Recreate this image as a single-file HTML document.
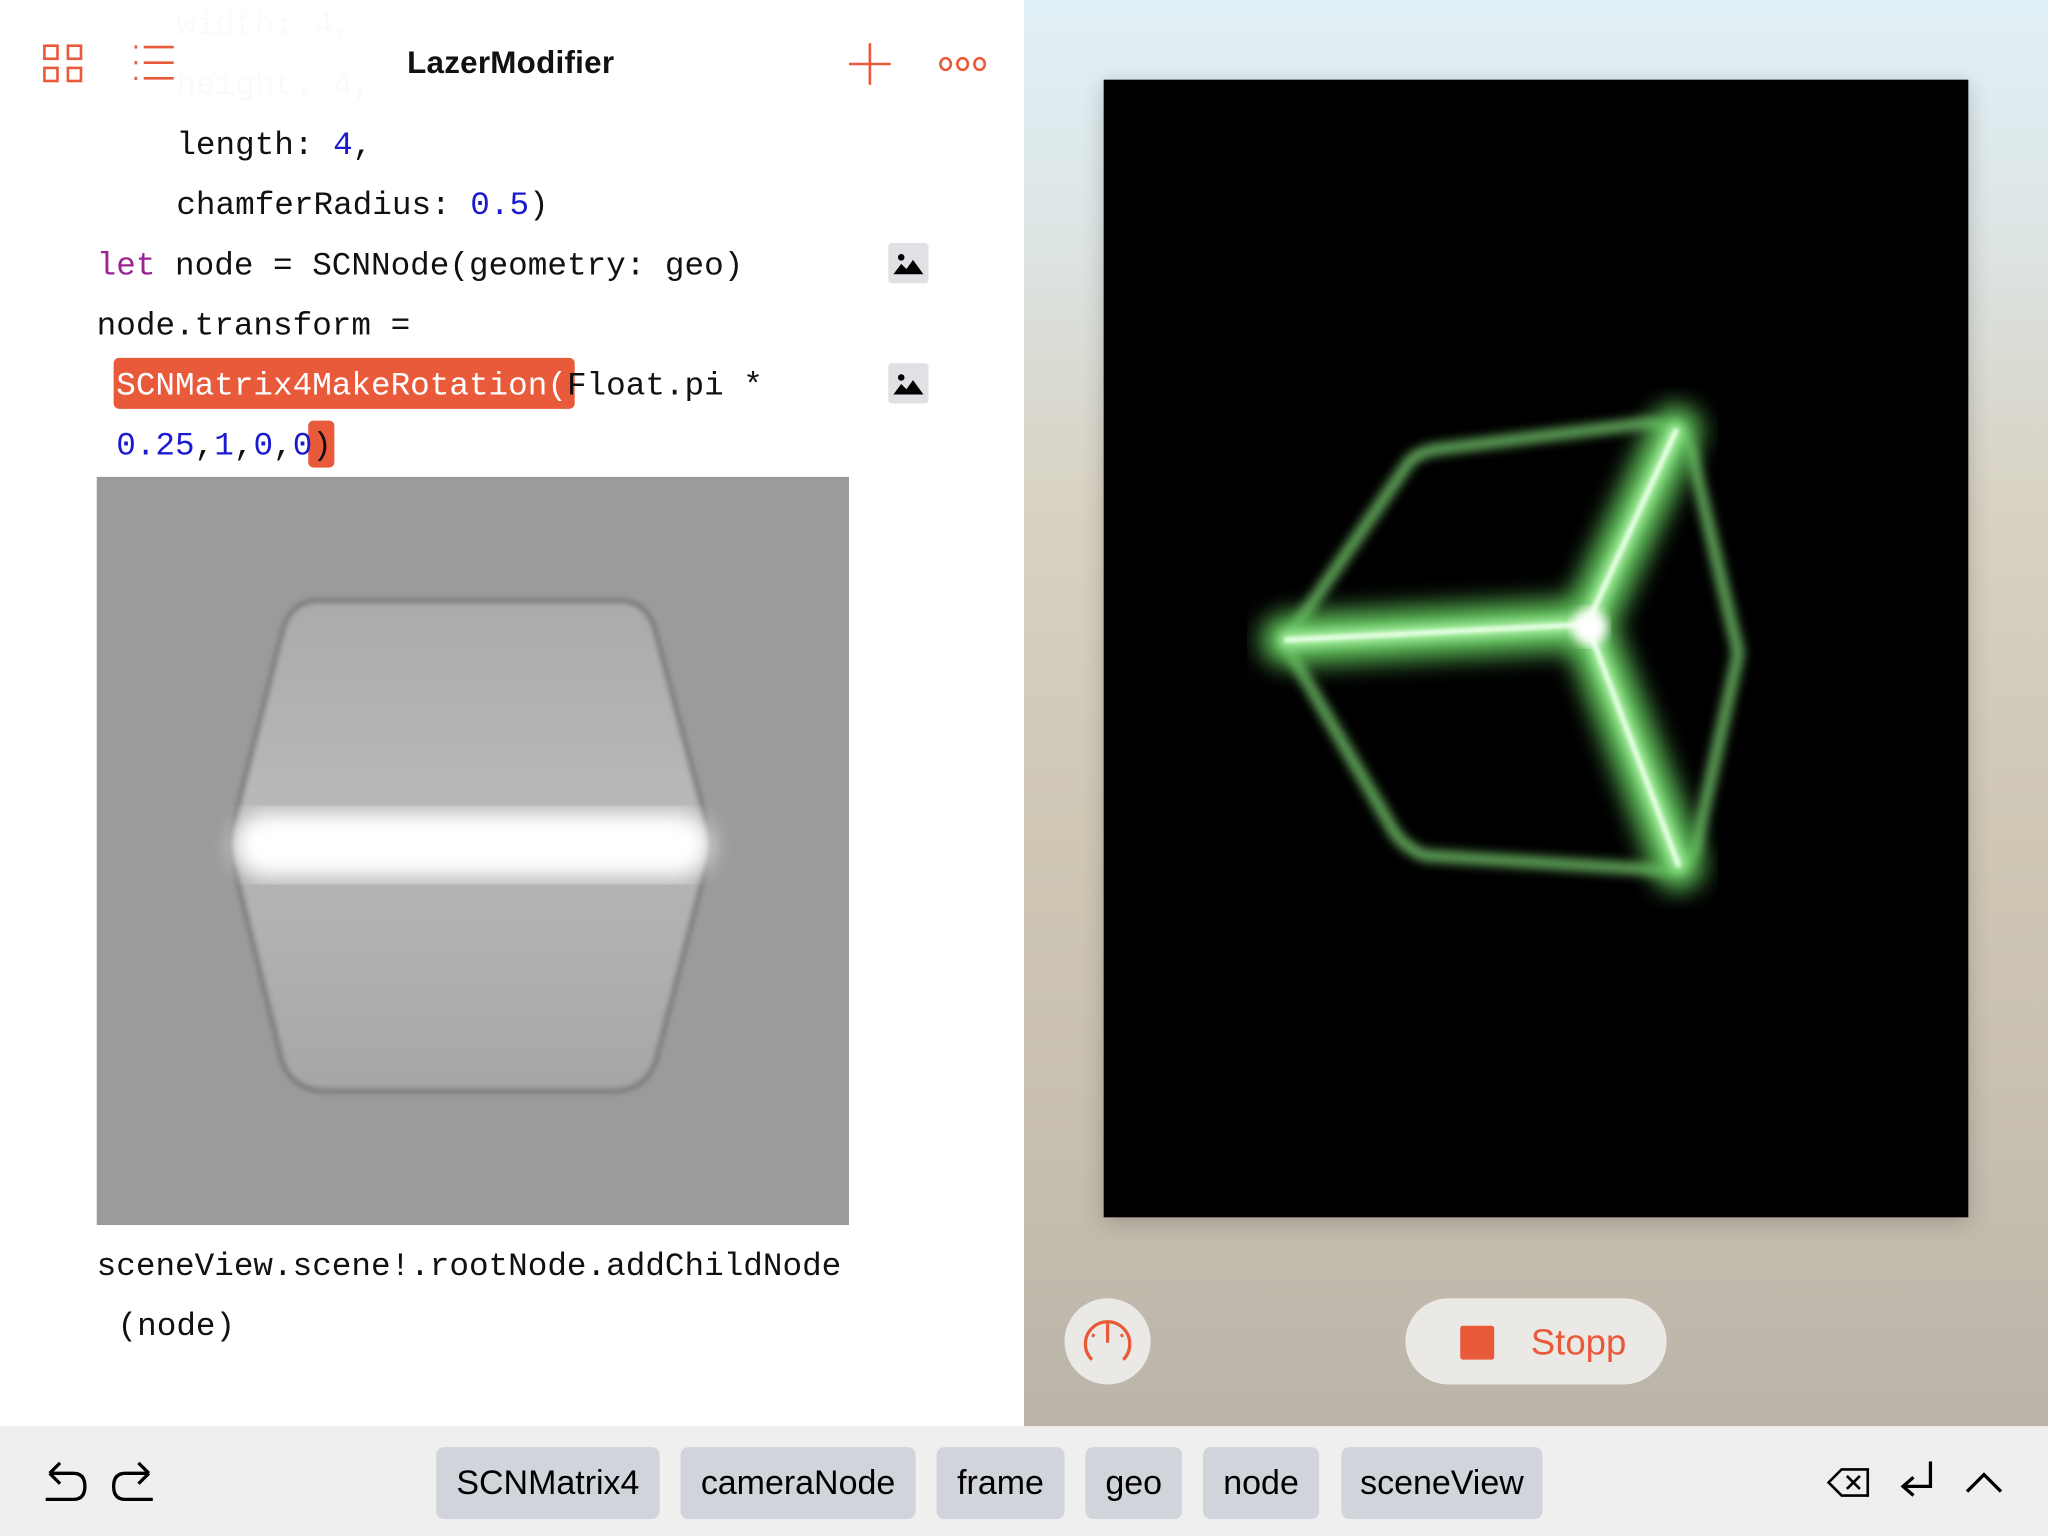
<!DOCTYPE html>
<html><head><meta charset="utf-8"><style>
html,body{margin:0;padding:0;width:2048px;height:1536px;overflow:hidden;background:#fff}
#s{position:absolute;left:0;top:0;width:1568px;height:1176px;transform:scale(1.306122);transform-origin:0 0;font-family:"Liberation Sans",sans-serif}
.c{position:absolute;font-family:"Liberation Mono",monospace;font-size:25px;color:#111;white-space:pre;line-height:30px}
.n{color:#1a1ad0}.k{color:#9b2393}
.chip{position:absolute;top:1108px;height:55px;background:#d1d4da;border-radius:6px;font-size:26px;line-height:55px;text-align:center;color:#000}
</style></head><body><div id="s">
<div style="position:absolute;left:0;top:0;width:784px;height:1092px;background:#fff"></div>
<div class="c" style="left:135px;top:5px;color:#f3f3f3">width: 4,</div>
<div class="c" style="left:135px;top:51px;color:#f3f3f3">height: 4,</div>
<div style="position:absolute;left:0;left:0;top:0;width:784px;height:90px;background:rgba(255,255,255,0.6)"></div>
<div style="position:absolute;left:0;width:784px;top:35px;text-align:center;font-size:24px;font-weight:bold;color:#111;letter-spacing:0.2px;margin-left:-1px">LazerModifier</div>
<svg style="position:absolute;left:0;top:0" width="784" height="90" fill="none" stroke="#e95a3b" stroke-width="2">
<rect x="34" y="35" width="10" height="10"/><rect x="52" y="35" width="10" height="10"/><rect x="34" y="52" width="10" height="10"/><rect x="52" y="52" width="10" height="10"/>
<path d="M110 36H133M110 48H133M110 60H133"/><path d="M103 36h2M103 48h2M103 60h2" stroke-width="2.5"/>
<path d="M666 33V65M650 49H682"/>
<ellipse cx="724" cy="49" rx="4" ry="4.5"/><ellipse cx="737" cy="49" rx="4" ry="4.5"/><ellipse cx="750" cy="49" rx="4" ry="4.5"/>
</svg>
<div class="c" style="left:135px;top:97px">length: <span class="n">4</span>,</div>
<div class="c" style="left:135px;top:143px">chamferRadius: <span class="n">0.5</span>)</div>
<div class="c" style="left:74px;top:189px"><span class="k">let</span> node = SCNNode(geometry: geo)</div>
<div class="c" style="left:74px;top:235px">node.transform =</div>
<div style="position:absolute;left:87px;top:274px;width:353px;height:39px;background:#e95a3b;border-radius:4px"></div>
<div style="position:absolute;left:236px;top:322px;width:20px;height:36px;background:#e95a3b;border-radius:4px"></div>
<div class="c" style="left:89px;top:281px"><span style="color:#fff">SCNMatrix4MakeRotation(</span>Float.pi *</div>
<div class="c" style="left:89px;top:327px"><span class="n">0.25</span>,<span class="n">1</span>,<span class="n">0</span>,<span class="n">0</span>)</div>
<svg style="position:absolute;left:680px;top:186px" width="31" height="31"><rect width="31" height="31" rx="3" fill="#dfe1e4"/><circle cx="10" cy="11" r="2.5" fill="#000"/><path d="M4 24L10 16L14 20L19 13L27 24Z" fill="#000"/></svg>
<svg style="position:absolute;left:680px;top:278px" width="31" height="31"><rect width="31" height="31" rx="3" fill="#dfe1e4"/><circle cx="10" cy="11" r="2.5" fill="#000"/><path d="M4 24L10 16L14 20L19 13L27 24Z" fill="#000"/></svg>
<svg style="position:absolute;left:74px;top:365px" width="576" height="573">
<defs><filter id="b1"><feGaussianBlur stdDeviation="8"/></filter><filter id="b2"><feGaussianBlur stdDeviation="2"/></filter>
<linearGradient id="g1" x1="0" y1="0" x2="0" y2="1"><stop offset="0" stop-color="#aaa"/><stop offset="0.4" stop-color="#b8b8b8"/><stop offset="0.7" stop-color="#b0b0b0"/><stop offset="1" stop-color="#a6a6a6"/></linearGradient></defs>
<rect width="576" height="573" fill="#9b9b9b"/>
<path d="M170 95 Q148 95 142 120 L104 270 Q102 280 104 292 L142 447 Q150 470 175 470 L395 470 Q420 470 428 447 L468 292 Q471 280 468 270 L428 120 Q422 95 400 95Z" fill="url(#g1)" stroke="#6e6e6e" stroke-width="3" filter="url(#b2)"/>
<rect x="105" y="257" width="365" height="50" rx="25" fill="#fff" filter="url(#b1)"/>
</svg>
<div class="c" style="left:74px;top:955px">sceneView.scene!.rootNode.addChildNode</div>
<div class="c" style="left:90px;top:1001px">(node)</div>
<div style="position:absolute;left:784px;top:0;width:784px;height:1092px;background:linear-gradient(180deg,#e2f1f8 0%,#dde6e6 15%,#d8d2c3 35%,#cfc6b4 60%,#c4bcae 85%,#bab4aa 100%)"></div>
<div style="position:absolute;left:845px;top:61px;width:662px;height:871px;background:#000;box-shadow:0 4px 16px rgba(0,0,0,0.2)"></div>
<svg style="position:absolute;left:845px;top:61px" width="662" height="871" fill="none" stroke-linecap="round" stroke-linejoin="round">
<defs><filter id="gl"><feGaussianBlur stdDeviation="9"/></filter><filter id="gm"><feGaussianBlur stdDeviation="4"/></filter><filter id="gs"><feGaussianBlur stdDeviation="1.5"/></filter></defs>
<g transform="translate(-845,-61)">
<path d="M988 486 L1080 352 Q1090 345 1100 344 L1260 324 Q1288 326 1295 346 L1331 500 L1298 650 Q1288 666 1270 666 L1090 655 Q1075 648 1068 638 L988 500Z" stroke="#6fbf68" stroke-width="8" filter="url(#gm)"/>
<path d="M985 490 L1215 478 M1215 478 L1283 330 M1215 478 L1285 662" stroke="#5fbf5a" stroke-width="40" filter="url(#gl)"/>
<path d="M985 490 L1215 478 M1215 478 L1283 330 M1215 478 L1285 662" stroke="#a8f0a2" stroke-width="12" filter="url(#gm)"/>
<path d="M985 490 L1215 478 M1215 478 L1283 330 M1215 478 L1285 662" stroke="#e8ffe6" stroke-width="4" filter="url(#gs)"/>
<circle cx="1217" cy="480" r="14" fill="#fff" filter="url(#gm)"/>
</g></svg>
<div style="position:absolute;left:815px;top:994px;width:66px;height:66px;border-radius:50%;background:#ebe9e5"></div>
<svg style="position:absolute;left:815px;top:994px" width="66" height="66" fill="none" stroke="#e95a3b" stroke-width="2.5"><path d="M21 47 A17 17 0 1 1 45 47"/><path d="M33 20V34"/><path d="M21 28l2 1M45 28l-2 1M33 18v2"/></svg>
<div style="position:absolute;left:1076px;top:994px;width:200px;height:66px;border-radius:33px;background:#ebe9e5"></div>
<div style="position:absolute;left:1118px;top:1015px;width:26px;height:26px;background:#e95a3b;border-radius:2px"></div>
<div style="position:absolute;left:1172px;top:1012px;font-size:28px;color:#e95a3b">Stopp</div>
<div style="position:absolute;left:0;top:1092px;width:1568px;height:84px;background:#efefef"></div>
<svg style="position:absolute;left:0;top:1092px" width="1568" height="84" fill="none" stroke="#000" stroke-width="2.5">
<path d="M38 36 L46 28 M38 36 L46 44 M38 36 H56 Q65 36 65 46 Q65 56 56 56 H35"/>
<path d="M114 36 L106 28 M114 36 L106 44 M114 36 H96 Q87 36 87 46 Q87 56 96 56 H117"/>
<path d="M1410 33 H1430 V53 H1410 L1400 43Z" stroke-width="2"/><path d="M1414 38l10 10M1424 38l-10 10" stroke-width="2"/>
<path d="M1478 27 V46 H1458 M1465 39 L1457 46 L1465 53"/>
<path d="M1506 50 L1519 37 L1532 50"/>
</svg>
<div class="chip" style="left:334px;width:171px">SCNMatrix4</div>
<div class="chip" style="left:521px;width:180px">cameraNode</div>
<div class="chip" style="left:717px;width:98px">frame</div>
<div class="chip" style="left:831px;width:74px">geo</div>
<div class="chip" style="left:921px;width:89px">node</div>
<div class="chip" style="left:1027px;width:154px">sceneView</div>
</div></body></html>
